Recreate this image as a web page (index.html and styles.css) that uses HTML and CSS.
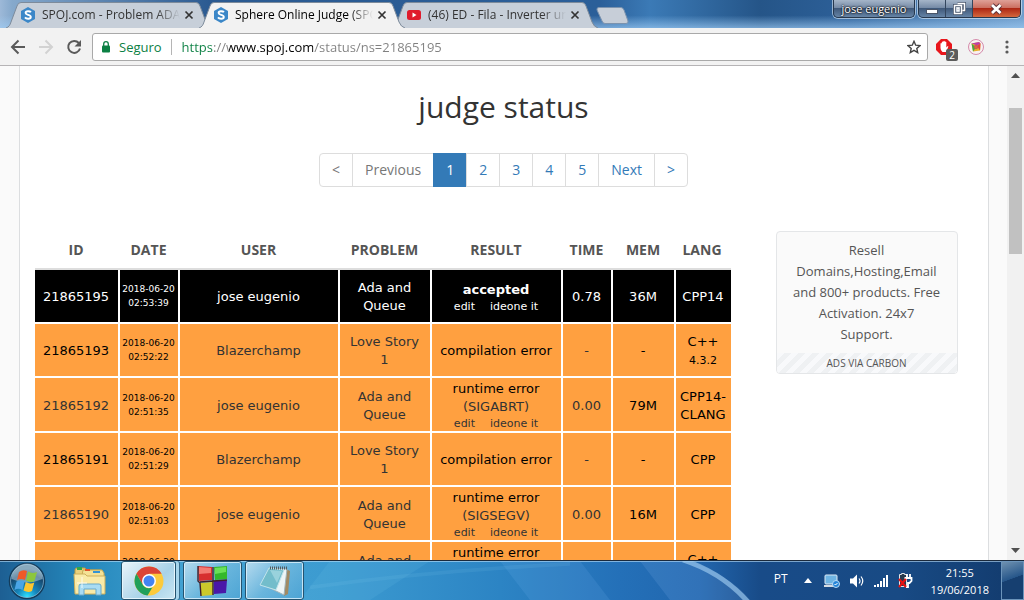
FILE: index.html
```html
<!DOCTYPE html>
<html lang="en">
<head>
<meta charset="utf-8">
<title>Sphere Online Judge (SPOJ)</title>
<link rel="stylesheet" href="styles.css">
</head>
<body>
<svg class="defs" width="0" height="0" aria-hidden="true">
  <defs>
    <symbol id="spoj" viewBox="0 0 14 16"><path d="M7 0l7 4v8l-7 4-7-4V4z" fill="#3b87c8"/><path d="M9.900 5.300C9 4 4.600 3.700 4.600 6c0 2.300 5.200 1.400 5.200 3.900 0 2.400-4.600 2.200-5.800.5" fill="none" stroke="#fff" stroke-width="1.900"/></symbol>
    <symbol id="cross" viewBox="0 0 10 10"><path d="M1.500 1.500l7 7m0-7l-7 7" stroke="#333" stroke-width="1.700"/></symbol>
    <symbol id="tabshape" viewBox="0 0 206 26"><path d="M0 26C3 25 4 23 5 20L11 4Q12 .5 15 .5H190Q193 .5 194 4L200 20Q202 25 206 26" fill="currentColor" stroke="#7d8b9b"/></symbol>
  </defs>
</svg>

<header class="titlebar">
  <nav class="tabs">
    <div class="tab">
      <svg class="tab-bg"><use href="#tabshape"/></svg>
      <svg class="favicon"><use href="#spoj"/></svg>
      <span class="tab-title">SPOJ.com - Problem ADA</span>
      <button class="tab-close" aria-label="Close tab"><svg width="10" height="10"><use href="#cross"/></svg></button>
    </div>
    <div class="tab tab-active">
      <svg class="tab-bg"><use href="#tabshape"/></svg>
      <svg class="favicon"><use href="#spoj"/></svg>
      <span class="tab-title">Sphere Online Judge (SPO</span>
      <button class="tab-close" aria-label="Close tab"><svg width="10" height="10"><use href="#cross"/></svg></button>
    </div>
    <div class="tab">
      <svg class="tab-bg"><use href="#tabshape"/></svg>
      <svg class="favicon" viewBox="0 0 14 14"><rect y="2" width="14" height="10" rx="2.500" fill="#e01b2c"/><path d="M5.500 4.500v5l4-2.500z" fill="#fff"/></svg>
      <span class="tab-title">(46) ED - Fila - Inverter un</span>
      <button class="tab-close" aria-label="Close tab"><svg width="10" height="10"><use href="#cross"/></svg></button>
    </div>
    <button class="new-tab" aria-label="New tab"><svg width="34" height="17"><path d="M3 .5H25Q27 .5 28 3L32 14Q32.500 16.500 30 16.500H9Q7 16.500 6 14L1 3Q.5 .5 3 .5z" fill="#c7ced8" stroke="#7c93ae"/></svg></button>
  </nav>
  <div class="window-buttons">
    <button class="profile">jose eugenio</button>
    <div class="caption">
      <button aria-label="Minimize"><svg width="12" height="14"><rect x=".5" y="7.500" width="11" height="4" fill="#fff" stroke="#4a5568"/></svg></button>
      <button aria-label="Restore"><svg width="13" height="13"><path d="M4.500 1.500h7v7h-2m-8-5h7v8h-7z" fill="none" stroke="#47546a" stroke-width="3"/><path d="M4.500 1.500h7v7h-2m-8-5h7v8h-7zM4 6h2v3H4z" fill="none" stroke="#fff" stroke-width="1.500"/></svg></button>
      <button class="close" aria-label="Close"><svg width="13" height="12"><path d="M2 2l8.500 8M10.500 2L2 10" stroke="#5c3038" stroke-width="4.500"/><path d="M2 2l8.500 8M10.500 2L2 10" stroke="#fff" stroke-width="2.800"/></svg></button>
    </div>
  </div>
</header>

<div class="toolbar">
  <button class="tool" aria-label="Back"><svg width="16" height="16"><path d="M15 8H2m6.500-6.500L2 8l6.500 6.500" fill="none" stroke="#5a5a5a" stroke-width="2"/></svg></button>
  <button class="tool" aria-label="Forward"><svg width="16" height="16"><path d="M1 8h13M7.500 1.500L14 8l-6.500 6.500" fill="none" stroke="#d2d2d2" stroke-width="2"/></svg></button>
  <button class="tool" aria-label="Reload"><svg width="16" height="16"><path d="M12.800 4A6 6 0 1 0 14 9.500" fill="none" stroke="#5a5a5a" stroke-width="2"/><path d="M15 1v6.500H8.500z" fill="#5a5a5a"/></svg></button>
  <div class="omnibox">
    <svg width="10" height="12"><rect x="1" y="4.500" width="8" height="7" rx="1" fill="#0b8043"/><path d="M2.700 5V3a2.300 2.300 0 0 1 4.600 0v2" fill="none" stroke="#0b8043" stroke-width="1.300"/></svg>
    <label class="secure" for="url">Seguro</label>
    <input id="url" class="url" type="text" value="https://www.spoj.com/status/ns=21865195">
    <button class="star" aria-label="Bookmark"><svg width="14" height="14" viewBox="0 0 14 14"><path d="M7 1.300l1.700 3.900 4.300.4-3.200 2.800.9 4.200L7 10.400l-3.700 2.200.9-4.200L1 5.600l4.300-.4z" fill="none" stroke="#444" stroke-width="1.400"/></svg></button>
  </div>
  <button class="ext" aria-label="Ad blocker">
    <svg width="16" height="16"><path d="M5 0h6l5 5v6l-5 5H5l-5-5V5z" fill="#e8161c"/><path d="M4.500 9V4.500q.7-1 1.300 0V3q.8-1 1.500 0v-.8q.8-.8 1.500 0V3q.9-.8 1.500 0v5.500l1.500-1.500q1 .3.400 1L10 13H6.500Q4.500 11.500 4.500 9z" fill="#fff"/></svg>
    <span class="badge">2</span>
  </button>
  <button class="ext" aria-label="Photo extension"><svg width="16" height="16"><circle cx="8" cy="8" r="7.500" fill="#f8f1f2" stroke="#d58bab"/><path d="M3.500 4.500L11 3l1.500 1.500-.5 7-7 1z" fill="#e9b02b"/><path d="M3.500 4.500L11 3l1.500 1.500-3 2z" fill="#bd3ca8"/><path d="M3.500 4.500L5 12.500l3-4z" fill="#41a93f"/><path d="M9 7l3.500-2.500-.5 7z" fill="#e53f3d"/><circle cx="8" cy="8" r="1.800" fill="#df633e" stroke="#c65a50"/></svg></button>
  <button class="ext menu" aria-label="Menu"><svg width="4" height="14"><circle cx="2" cy="2" r="1.600" fill="#5a5a5a"/><circle cx="2" cy="7" r="1.600" fill="#5a5a5a"/><circle cx="2" cy="12" r="1.600" fill="#5a5a5a"/></svg></button>
</div>

<div class="viewport">
  <div class="page">
    <main class="container">
      <h1>judge status</h1>
      <ul class="pagination">
        <li><span>&lt;</span></li>
        <li><span>Previous</span></li>
        <li><a class="current" href="#">1</a></li>
        <li><a href="#">2</a></li>
        <li><a href="#">3</a></li>
        <li><a href="#">4</a></li>
        <li><a href="#">5</a></li>
        <li><a href="#">Next</a></li>
        <li><a href="#">&gt;</a></li>
      </ul>
      <div class="columns">
        <table class="status">
          <colgroup><col class="c-id"><col class="c-date"><col><col class="c-problem"><col class="c-result"><col class="c-time"><col class="c-mem"><col class="c-lang"></colgroup>
          <thead>
            <tr><th>ID</th><th>DATE</th><th>USER</th><th>PROBLEM</th><th>RESULT</th><th>TIME</th><th>MEM</th><th>LANG</th></tr>
          </thead>
          <tbody>
            <tr class="accepted"><td>21865195</td><td class="date">2018-06-20 02:53:39</td><td><a href="#">jose eugenio</a></td><td><a href="#">Ada and Queue</a></td><td class="result"><strong>accepted</strong><div class="actions"><a href="#">edit</a><a href="#">ideone it</a></div></td><td>0.78</td><td>36M</td><td class="lang">CPP14</td></tr>
            <tr><td>21865193</td><td class="date">2018-06-20 02:52:22</td><td><a href="#">Blazerchamp</a></td><td><a href="#">Love Story 1</a></td><td class="result">compilation error</td><td class="soft">-</td><td>-</td><td class="lang">C++ <small>4.3.2</small></td></tr>
            <tr><td><a href="#">21865192</a></td><td class="date">2018-06-20 02:51:35</td><td><a href="#">jose eugenio</a></td><td><a href="#">Ada and Queue</a></td><td class="result">runtime error <a href="#">(SIGABRT)</a><div class="actions"><a href="#">edit</a><a href="#">ideone it</a></div></td><td class="soft">0.00</td><td>79M</td><td class="lang">CPP14-CLANG</td></tr>
            <tr><td>21865191</td><td class="date">2018-06-20 02:51:29</td><td><a href="#">Blazerchamp</a></td><td><a href="#">Love Story 1</a></td><td class="result">compilation error</td><td class="soft">-</td><td>-</td><td class="lang">CPP</td></tr>
            <tr><td><a href="#">21865190</a></td><td class="date">2018-06-20 02:51:03</td><td><a href="#">jose eugenio</a></td><td><a href="#">Ada and Queue</a></td><td class="result">runtime error <a href="#">(SIGSEGV)</a><div class="actions"><a href="#">edit</a><a href="#">ideone it</a></div></td><td class="soft">0.00</td><td>16M</td><td class="lang">CPP</td></tr>
            <tr><td></td><td class="date">2018-06-20 02:50:41</td><td></td><td><a href="#">Ada and Queue</a></td><td class="result">runtime error <a href="#">(SIGSEGV)</a><div class="actions"><a href="#">edit</a><a href="#">ideone it</a></div></td><td></td><td></td><td class="lang">C++ <small>4.3.2</small></td></tr>
          </tbody>
        </table>
        <aside class="ad">
          <a class="ad-text" href="#">Resell Domains,Hosting,Email and 800+ products. Free Activation. 24x7 Support.</a>
          <a class="ad-via" href="#">ADS VIA CARBON</a>
        </aside>
      </div>
    </main>
  </div>
  <div class="scrollbar">
    <svg width="9" height="5"><path d="M4.500 0L9 5H0z" fill="#505050"/></svg>
    <div class="track"><div class="thumb"></div></div>
    <svg width="9" height="5"><path d="M0 0h9L4.500 5z" fill="#505050"/></svg>
  </div>
</div>

<footer class="taskbar">
  <svg class="streaks" viewBox="0 0 1024 40" preserveAspectRatio="none"><path d="M330 0H430L370 40H300z" fill="#7dd0ee" opacity=".12"/><path d="M500 0H580L610 40H530z" fill="#8fc8ff" opacity=".12"/><path d="M640 0H690Q730 15 750 40H670z" fill="#a0c8ff" opacity=".13"/><path d="M683 -1Q722 12 748 42" fill="none" stroke="#a9d3f5" stroke-width="5" opacity=".6"/><path d="M310 27Q430 10 570 3" fill="none" stroke="#8fd4f5" stroke-width="4" opacity=".1"/></svg>
  <button class="start" aria-label="Start">
    <svg width="38" height="38" viewBox="0 0 38 38"><defs><radialGradient id="orb" cx=".5" cy=".95" r=".8"><stop offset="0" stop-color="#2fe3ff"/><stop offset=".35" stop-color="#1587bd"/><stop offset=".8" stop-color="#17486f"/><stop offset="1" stop-color="#4a7896"/></radialGradient></defs><circle cx="19" cy="19" r="17.500" fill="url(#orb)" stroke="#143c5b" stroke-width="1.500"/><circle cx="19" cy="19" r="16.500" fill="none" stroke="#89b8d4" opacity=".7"/><path d="M3.500 17A15.500 15.500 0 0 1 34.500 17Q19 24 3.500 17z" fill="#d6e7f0" opacity=".45"/><path d="M11 10q4-3 8-1l-2 9q-4-2-8 0z" fill="#ef5a28"/><path d="M20 9.500q4 2.500 9 .5l-2.500 9q-4 2-8.500-.5z" fill="#8cc63e"/><path d="M8.500 19.500q4-2 8-.2L14.500 28q-4-2.500-8 0z" fill="#4aa5e6"/><path d="M17.800 20q4 2.500 8.500.5L24 29q-4 2-8.500-.5z" fill="#fdc62f"/></svg>
  </button>
  <div class="apps">
    <button class="app pinned" aria-label="Explorer"><svg width="34" height="32"><path d="M2 5q0-2 2-2h8l2 2h14v18H2z" fill="#ead17c" stroke="#b99a42"/><path d="M4 2h5v3H4z" fill="#2fa84a"/><path d="M10 5h19l2 3v19H6z" fill="#f5e296" stroke="#c7aa55"/><path d="M12 4h5v2h-5z" fill="#e3542c"/><path d="M20 6h7v2h-7z" fill="#3594d4"/><path d="M1 9h11l2 2h18v18H2z" fill="#f9eaa8" stroke="#cdb05d"/><path d="M6 30V21q0-2 2-2h18q2 0 2 2v9h-5v-6H11v6z" fill="#a9dcf3" stroke="#66a9cd"/><path d="M9 12v11M4 18h10" stroke="#fff" opacity=".8"/></svg></button>
    <button class="app active stacked" aria-label="Chrome"><svg width="30" height="30"><circle cx="15" cy="15" r="14.500" fill="#fcca3c"/><path d="M2.400 7.800A14.500 14.500 0 0 1 27.600 7.800H15L8.700 18.600z" fill="#db4437"/><path d="M2.400 7.800L8.700 18.600q2 3.700 6.300 3.700l3.500-1L13.500 29.400A14.500 14.500 0 0 1 2.400 7.800z" fill="#21a05b"/><circle cx="15" cy="15" r="7" fill="#fff"/><circle cx="15" cy="15" r="5.500" fill="#4384f3"/></svg></button>
    <button class="app" aria-label="Blocks"><svg width="32" height="32"><path d="M1 1l14 1v13l-13 1z" fill="#d72f2f"/><path d="M2 2l12 1v5L2 9z" fill="#f37b72"/><path d="M17 2l13-1v13l-12 1z" fill="#34b82b"/><path d="M18 3l11-1v5l-11 2z" fill="#6be157"/><path d="M3 18l13-1v13L4 31z" fill="#cbc92b"/><path d="M17 16l13-1-1 13-12 1z" fill="#4a18a8"/><path d="M1 1v15l2 2 1 13M16 2v28M3 17l27-2" fill="none" stroke="#40212b" stroke-width="1.400"/></svg></button>
    <button class="app" aria-label="Notepad"><svg width="32" height="32"><path d="M27 4l4 2-2 23-4 2z" fill="#a18a64"/><path d="M10 3l18 1-3 26L7 21z" fill="#eef5f6" stroke="#a0b3b9"/><path d="M10 3l15 2-8 20L1 20z" fill="#73bdcb" stroke="#c2e4eb"/><path d="M11 5l12 1-5 12z" fill="#b3e0e7" opacity=".6"/><path d="M11 3h17" stroke="#515b61" stroke-width="3" stroke-dasharray="1 1"/></svg></button>
  </div>
  <div class="tray">
    <span class="lang-code">PT</span>
    <svg class="more" width="8" height="5"><path d="M4 0l4 5H0z" fill="#fff"/></svg>
    <svg width="16" height="14"><rect x="1" y="1" width="12" height="9" rx="1" fill="#6eb4e3" stroke="#dce9f4"/><path d="M0 11h12v2H0z" fill="#d5dde4"/><circle cx="12" cy="10" r="3.500" fill="#2685d8" stroke="#b8dcf7"/><path d="M10.500 10l1 1 2-2" fill="none" stroke="#fff"/></svg>
    <svg width="15" height="14"><path d="M1 4.500h3l4-4v13l-4-4H1z" fill="#fff"/><path d="M10 4.500q2 2.500 0 5M12 2.500q3.500 4.500 0 9" fill="none" stroke="#fff" stroke-width="1.200"/></svg>
    <svg width="16" height="12"><path d="M1 10h2v2H1zM4 9h2v3H4zM7 6h2v6H7zM10 3h2v9h-2zM13 0h2v12h-2z" fill="#fff"/></svg>
    <svg width="15" height="17"><path d="M1.500 2.500h2v-1h3v1h2v12h-7z" fill="#26384c" stroke="#e1e5e9"/><path d="M9 2v4m3-4v4M6.500 6h7v3l-2 2H10v4H8" fill="none" stroke="#fff" stroke-width="1.800"/><path d="M1 7l7 8M8 7l-7 8" stroke="#e71111" stroke-width="2.200"/></svg>
    <div class="clock"><span>21:55</span><span>19/06/2018</span></div>
  </div>
  <button class="show-desktop" aria-label="Show desktop"></button>
</footer>
</body>
</html>
```
FILE: styles.css
```css
* { box-sizing: border-box; }

body {
  margin: 0;
  height: 100vh;
  display: flex;
  flex-direction: column;
  overflow: hidden;
  font-family: "Open Sans", sans-serif;
  font-size: 14px;
  line-height: 20px;
  color: #333;
  background: #fafafa;
}

button {
  padding: 0;
  border: 0;
  background: none;
  font: inherit;
  color: inherit;
  display: flex;
  align-items: center;
  justify-content: center;
}

a { color: inherit; text-decoration: none; }
svg { display: block; flex: none; }
.defs { position: absolute; }

/* Title bar */
.titlebar {
  display: flex;
  justify-content: space-between;
  height: 28px;
  flex: none;
  padding-left: 6px;
  background:
    linear-gradient(180deg, transparent 55%, rgba(160, 205, 245, .65)),
    linear-gradient(90deg, #9db9d8, #86a9cc 12px, #2b5a91 210px, #2b5f99 600px, #3b7ab6 650px, #255588 760px, #2d6099 850px, #6f9dcb 100%);
}
.tabs { display: flex; align-items: flex-end; }
.tab {
  position: relative;
  display: flex;
  align-items: center;
  width: 206px;
  height: 26px;
  margin-right: -13px;
  padding-left: 15px;
  color: #c7cfd9;
}
.tab-active { z-index: 1; color: #f2f2f2; }
.tab-bg { position: absolute; inset: 0; width: 206px; height: 26px; }
.favicon { position: relative; width: 14px; height: 16px; }
.tab-title {
  position: relative;
  flex: 0 0 139px;
  min-width: 0;
  margin-left: 7px;
  white-space: nowrap;
  font-size: 12px;
  color: #333;
  mask-image: linear-gradient(90deg, #000 114px, transparent 138px);
}
.tab-active .tab-title { color: #000; }
.tab-close { position: relative; width: 16px; height: 16px; }
.new-tab { align-self: flex-start; margin: 7px 0 0 11px; }
.window-buttons { display: flex; align-items: flex-start; gap: 3px; padding-right: 3px; }
.profile, .caption {
  height: 18px;
  border: 1px solid #27384d;
  border-top: 0;
  border-radius: 0 0 5px 5px;
  box-shadow: 0 0 0 1px rgba(225, 238, 250, .6);
  background: linear-gradient(#a5b5c9, #7187a3 50%, #40597a 50%, #6684a6);
  overflow: hidden;
}
.profile {
  width: 82px;
  font-size: 11px;
  line-height: 17px;
  color: #fff;
  text-shadow: 0 0 2px #000, 0 0 2px #000;
}
.caption { display: flex; width: 103px; }
.caption button { flex: 1; border-right: 1px solid #33465e; }
.caption .close { flex: 0 0 47px; border: 0; background: linear-gradient(#dfa097, #c96b5c 50%, #ad2714 50%, #d4683d); }

/* Toolbar */
.toolbar {
  display: flex;
  align-items: center;
  flex: none;
  height: 38px;
  padding: 0 15px 0 10px;
  gap: 12px;
  background: #f2f2f2;
  border-bottom: 1px solid #b6b4b6;
}
.omnibox {
  display: flex;
  align-items: center;
  flex: 1;
  height: 28px;
  margin: 0 -4px 0 -2px;
  padding: 0 6px 0 8px;
  background: #fff;
  border: 1px solid #a9a9a9;
  border-radius: 3px;
  font-size: 13px;
}
.secure {
  margin-left: 8px;
  padding-right: 9px;
  border-right: 1px solid #b5b5b5;
  line-height: 16px;
  color: #0b8043;
}
.url {
  flex: 1;
  min-width: 0;
  margin: 0 0 0 10px;
  padding: 0;
  border: 0;
  outline: 0;
  font: inherit;
  color: transparent;
  background: linear-gradient(90deg, #0b8043 32px, #808080 32px 47px, #000 47px 131px, #808080 131px);
  background-clip: text;
}
.tool { width: 16px; height: 16px; }
.ext { position: relative; width: 16px; height: 16px; }
.ext + .ext { margin-left: 4px; }
.ext.menu { width: 4px; margin-left: 9px; }
.badge {
  position: absolute;
  left: 10px;
  top: 10px;
  width: 12px;
  height: 12px;
  border-radius: 2px;
  background: #5c5c5c;
  color: #fff;
  font-size: 10px;
  line-height: 12px;
}

/* Page */
.viewport { display: flex; flex: 1; min-height: 0; }
.page { flex: 1; overflow: hidden; }
.container {
  max-width: 970px;
  min-height: 100%;
  margin: 0 auto;
  padding: 22px 30px 0 15px;
  background: #fff;
  border: solid #dcdee0;
  border-width: 0 1px;
}
h1 {
  margin: 0 -15px 27px 0;
  font-size: 30px;
  line-height: 38px;
  font-weight: 400;
  text-align: center;
}
.pagination {
  display: flex;
  justify-content: center;
  margin: 0 -15px 44px 0;
  padding: 0;
  list-style: none;
  color: #337ab7;
}
.pagination a, .pagination span {
  display: block;
  margin-left: -1px;
  padding: 6px 12px;
  background: #fff;
  border: 1px solid #ddd;
}
.pagination span { color: #777; }
.pagination .current { color: #fff; background: #337ab7; border-color: #337ab7; }
.pagination li:first-child span { margin-left: 0; border-radius: 4px 0 0 4px; }
.pagination li:last-child a { border-radius: 0 4px 4px 0; }

.columns { display: flex; align-items: flex-start; gap: 45px; }
.status {
  flex: 1;
  table-layout: fixed;
  border-collapse: separate;
  border-spacing: 0;
  width: 0;
  text-align: center;
}
.c-id { width: 85px; }
.c-date { width: 60px; }
.c-problem { width: 92px; }
.c-result { width: 131px; }
.c-time { width: 50px; }
.c-mem { width: 63px; }
.c-lang { width: 55px; }
.status th {
  height: 39px;
  padding: 0 2px 0 0;
  border-bottom: 2px solid #ddd;
  color: #555;
}
.status td {
  height: 54px;
  padding: 2px 8px 0;
  border: solid #fff;
  border-width: 0 2px 2px 0;
  background: #ffa040;
  color: #000;
  font-family: "DejaVu Sans", sans-serif;
  font-size: 13px;
  line-height: 18px;
}
.status td:last-child { border-right: 0; }
.status td:first-child, .status .lang { padding: 2px 0 0; }
.status .date { padding: 0; font-size: 9px; line-height: 14px; }
.status small { font-size: 11px; }
.status td a, .status .soft { color: #333; }
.status .accepted td, .status .accepted a { background: #000; color: #fff; }
.status .actions {
  display: flex;
  justify-content: center;
  gap: 15px;
  font-size: 11px;
  line-height: 15px;
}

.ad {
  flex: 0 0 182px;
  border: 1px solid #e4e6e8;
  border-radius: 4px;
  background: #fafafa;
  color: #555;
  text-align: center;
  overflow: hidden;
}
.ad-text { display: block; padding: 8px 15px; font-size: 13px; line-height: 21px; }
.ad-via {
  display: block;
  font-size: 10px;
  line-height: 20px;
  background: repeating-linear-gradient(135deg, #f8f9fb 0 5px, #eff1f3 5px 10px);
}

.scrollbar {
  display: flex;
  flex-direction: column;
  align-items: center;
  flex: 0 0 17px;
  padding: 7px 0;
  background: #f1f1f1;
}
.track { flex: 1; width: 13px; padding-top: 30px; }
.thumb { height: 146px; background: #c1c1c1; }

/* Taskbar */
.taskbar {
  position: relative;
  display: flex;
  flex: none;
  height: 40px;
  border-top: 1px solid #1b2a3c;
  box-shadow: inset 0 1px 0 rgba(190, 225, 250, .6);
  background: linear-gradient(90deg, #1d5f93, #2487bb 80px, #44a3d3 190px, #3b9ad0 340px, #2c84c4 500px, #2470b8 620px, #2166ae 700px, #184b88 760px, #184a84 900px, #123a6c);
  color: #fff;
}
.streaks { position: absolute; inset: 0; width: 100%; height: 100%; }
.start { position: relative; width: 38px; margin-left: 8px; }
.apps { position: relative; display: flex; gap: 3px; margin-left: 15px; }
.app {
  width: 59px;
  border: 1px solid #24536f;
  border-radius: 3px;
  box-shadow: inset 0 0 0 1px rgba(225, 243, 253, .8);
  background: linear-gradient(135deg, rgba(220, 238, 248, .75), rgba(140, 200, 230, .55) 50%, rgba(90, 170, 215, .5));
}
.app.pinned { border-color: transparent; box-shadow: none; background: none; width: 57px; }
.app.active { width: 55px; background: linear-gradient(135deg, #eaf4fa, #a8d2e8 60%, #c8e6f3); }
.app.stacked { margin-right: 4px; box-shadow: inset 0 0 0 1px #e6f5fc, 3px 0 0 #a5d5ec, 4px 0 0 #356e90; }
.tray {
  position: relative;
  display: flex;
  align-items: center;
  gap: 9px;
  margin-left: auto;
  font-size: 12px;
  line-height: 17px;
}
.lang-code { margin: 0 7px 5px 0; }
.more { margin-right: 3px; }
.clock { display: flex; flex-direction: column; align-items: center; margin: 0 12px 0 9px; font-size: 11px; }
.show-desktop {
  position: relative;
  width: 23px;
  border: 1px solid #6b94bb;
  background: linear-gradient(160deg, #6f91b0, #26568a 45%, #163f70 46%);
}
```
